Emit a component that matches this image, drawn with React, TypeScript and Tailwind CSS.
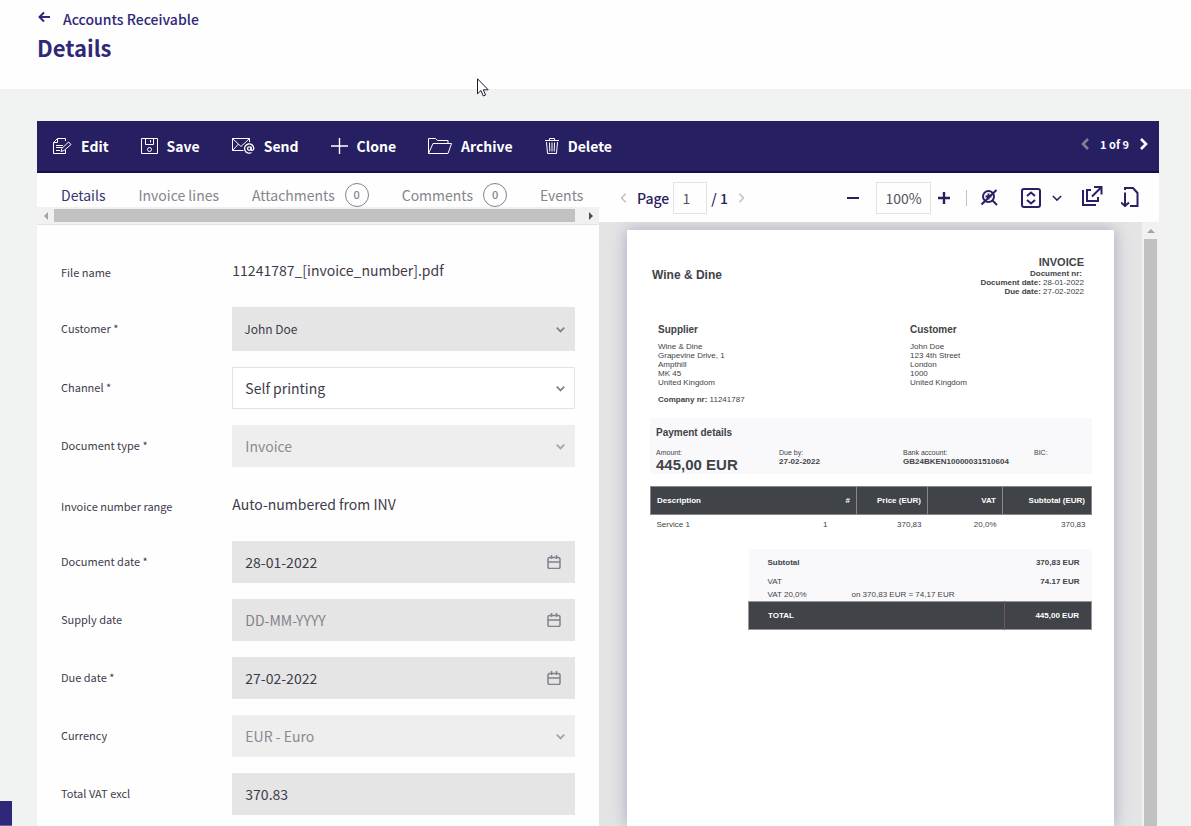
import React from 'react';
import clsx from 'clsx';

const EditIcon = () => (
    <svg width="19" height="16" viewBox="0 0 19 16" fill="none" stroke="currentColor">
        <path d="M12.5 3V.5H4.5l-4 4v11h12V12" />
        <path d="M4.5 .5v4h-4M3 7.5h7M3 9.5h6M3 12.5h4" />
        <path d="M15.5 4l2.5 2.5-7 6-3 1 .8-3z" />
    </svg>
);

const SaveIcon = () => (
    <svg width="17" height="16" viewBox="0 0 17 16" fill="none" stroke="currentColor">
        <path d="M.5 .5h16v15H.5zM4.5 .5v6h8v-6M9.5 2v2.5" />
        <circle cx="8.5" cy="11.5" r="2" />
    </svg>
);

const SendIcon = () => (
    <svg width="23" height="16" viewBox="0 0 23 16" fill="none" stroke="currentColor">
        <path d="M17.5 4V.5H.5v12h11" />
        <path d="M.5 .5L9 8.5l8.5-8M.5 12.5L6.5 6" />
        <circle cx="17.3" cy="10.6" r="1.8" strokeWidth="1.3" />
        <path d="M19.1 8.7v2.8c0 1.3 2.7 1.2 2.7-1.2a4.6 4.6 0 1 0-2.3 4.2" strokeWidth="1.3" />
    </svg>
);

const PlusIcon = () => (
    <svg width="17" height="16" viewBox="0 0 17 16" fill="none" stroke="currentColor" strokeWidth="1.4">
        <path d="M8.5 0v16M0 8h17" />
    </svg>
);

const FolderIcon = () => (
    <svg width="24" height="16" viewBox="0 0 24 16" fill="none" stroke="currentColor">
        <path d="M.5 15.5V.5h7l2 2h10.5v3" />
        <path d="M.5 15.5l4.500-10h18.500l-3.500 10z" />
    </svg>
);

const TrashIcon = () => (
    <svg width="14" height="16" viewBox="0 0 14 16" fill="none" stroke="currentColor">
        <path d="M0 2.5h14M4.500 2.5v-2h5v2M1.500 4l1 11.500h9l1-11.500" />
        <path d="M4.500 4.500l.3 9M7 4.500v9M9.500 4.500l-.3 9" />
    </svg>
);

const Chevron = ({ d, size, width }: { d: string; size: number; width: number }) => (
    <svg width={size} height={size} viewBox="0 0 12 12" fill="none" stroke="currentColor" strokeWidth={width}>
        <path d={d} />
    </svg>
);

const LEFT = 'M8 1L3 6l5 5';
const RIGHT = 'M4 1l5 5-5 5';
const DOWN = 'M1 3.500l5 5 5-5';

const CalendarIcon = () => (
    <svg width="14" height="14" viewBox="0 0 14 14" fill="none" stroke="currentColor" strokeWidth="1.5">
        <rect x="1" y="2.500" width="12" height="11" rx="1.500" />
        <path d="M1 7h12M4.500 0v4M9.500 0v4" />
    </svg>
);

const ACTIONS = [
    { label: 'Edit', icon: <EditIcon /> },
    { label: 'Save', icon: <SaveIcon /> },
    { label: 'Send', icon: <SendIcon /> },
    { label: 'Clone', icon: <PlusIcon /> },
    { label: 'Archive', icon: <FolderIcon /> },
    { label: 'Delete', icon: <TrashIcon /> },
];

const TABS = [
    { label: 'Details' },
    { label: 'Invoice lines' },
    { label: 'Attachments', count: 0 },
    { label: 'Comments', count: 0 },
    { label: 'Events' },
];

type Field = {
    id: string;
    label: string;
    kind: 'text' | 'select' | 'date' | 'input';
    value: string;
    disabled?: boolean;
    look?: string;
};

const FIELDS: Field[] = [
    { id: 'file', label: 'File name', kind: 'text', value: '11241787_[invoice_number].pdf' },
    { id: 'customer', label: 'Customer *', kind: 'select', value: 'John Doe', look: 'h-11 bg-[#e5e5e5] pl-3 text-xs' },
    { id: 'channel', label: 'Channel *', kind: 'select', value: 'Self printing', look: 'h-[42px] border border-[#e3e3e3] bg-white pl-3 text-sm' },
    { id: 'type', label: 'Document type *', kind: 'select', value: 'Invoice', disabled: true, look: 'h-[42px] bg-[#eee] pl-[13px] text-sm' },
    { id: 'range', label: 'Invoice number range', kind: 'text', value: 'Auto-numbered from INV' },
    { id: 'date', label: 'Document date *', kind: 'date', value: '28-01-2022' },
    { id: 'supply', label: 'Supply date', kind: 'date', value: '' },
    { id: 'due', label: 'Due date *', kind: 'date', value: '27-02-2022' },
    { id: 'currency', label: 'Currency', kind: 'select', value: 'EUR - Euro', disabled: true, look: 'h-[42px] bg-[#eee] pl-[13px] text-sm' },
    { id: 'total', label: 'Total VAT excl', kind: 'input', value: '370.83' },
];

const FieldControl = ({ field }: { field: Field }) => {
    if (field.kind === 'text') {
        return <output id={field.id} className="flex h-[42px] items-center text-sm">{field.value}</output>;
    }
    if (field.kind === 'select') {
        return (
            <div className="relative">
                <select
                    id={field.id}
                    disabled={field.disabled}
                    className={clsx('w-full appearance-none pr-8 opacity-100', field.disabled && 'text-[#8d898f]', field.look)}
                >
                    <option>{field.value}</option>
                </select>
                <span className={clsx('pointer-events-none absolute inset-y-0 right-2.5 flex items-center', field.disabled ? 'text-[#a5a3a8]' : 'text-[#85808f]')}>
                    <Chevron d={DOWN} size={9} width={2.4} />
                </span>
            </div>
        );
    }
    return (
        <div className="relative">
            <input
                id={field.id}
                type="text"
                defaultValue={field.value}
                placeholder={field.kind === 'date' ? 'DD-MM-YYYY' : undefined}
                className="h-[42px] w-full bg-[#e5e5e5] pl-[13px] pr-10 text-sm placeholder:text-[#85828a]"
            />
            {field.kind === 'date' && (
                <button type="button" aria-label="Open calendar" className="absolute inset-y-0 right-3.5 text-[#85808f]">
                    <CalendarIcon />
                </button>
            )}
        </div>
    );
};

const DetailsPane = () => (
    <section className="flex min-h-0 min-w-0 flex-col overflow-hidden">
        <nav className="flex h-[34px] shrink-0 items-end gap-[33px] overflow-hidden px-6">
            {TABS.map((tab, i) => (
                <button
                    key={tab.label}
                    className={clsx('flex h-6 shrink-0 items-center gap-2.5 whitespace-nowrap text-sm', i === 0 ? 'text-[#37336b]' : 'text-[#85858d]')}
                >
                    {tab.label}
                    {tab.count !== undefined && (
                        <span className="flex size-6 items-center justify-center rounded-full border border-[#85808f] text-[11px] font-medium">
                            {tab.count}
                        </span>
                    )}
                </button>
            ))}
        </nav>
        {/* Horizontal scrollbar of the tab strip */}
        <div className="flex h-[18px] shrink-0 border-b border-[#e3e3e3] bg-[#f1f1f1]">
            <span className="flex w-[17px] items-center justify-center">
                <svg width="4" height="8" viewBox="0 0 4 8" fill="#a3a3a3"><path d="M4 0v8L0 4z" /></svg>
            </span>
            <span className="my-0.5 flex-1 bg-[#c1c1c1]" />
            <span className="flex w-6 items-center justify-end pr-1.5">
                <svg width="4" height="8" viewBox="0 0 4 8" fill="#505050"><path d="M0 0v8l4-4z" /></svg>
            </span>
        </div>
        <form className="flex flex-col gap-4 p-6 text-[#3f3b4c]">
            {FIELDS.map((field) => (
                <div key={field.id} className="grid shrink-0 grid-cols-3 items-center">
                    <label htmlFor={field.id} className={clsx('text-[11px] leading-4', field.kind === 'text' ? 'pt-1' : 'pb-0.5')}>
                        {field.label}
                    </label>
                    <div className="col-span-2">
                        <FieldControl field={field} />
                    </div>
                </div>
            ))}
        </form>
    </section>
);

const ViewerToolbar = () => (
    <div className="flex h-[49px] shrink-0 items-center px-5 text-sm text-[#272063]">
        <button aria-label="Previous page" className="text-[#c0bfc6]"><Chevron d={LEFT} size={10} width={1.8} /></button>
        <label htmlFor="page" className="ml-2 font-medium">Page</label>
        <input id="page" defaultValue="1" className="ml-1 h-8 w-[34px] border border-[#e3e3e3] pr-2 text-center text-[#55515f]" />
        <span className="ml-1 font-medium">/ 1</span>
        <button aria-label="Next page" className="ml-2 text-[#c0bfc6]"><Chevron d={RIGHT} size={10} width={1.8} /></button>

        <div className="ml-auto flex items-center">
            <button aria-label="Zoom out">
                <svg width="12" height="12" viewBox="0 0 12 12" stroke="currentColor" strokeWidth="2"><path d="M0 6h12" /></svg>
            </button>
            <input aria-label="Zoom level" defaultValue="100%" className="ml-[17px] h-8 w-[55px] border border-[#e3e3e3] text-center text-[#55515f]" />
            <button aria-label="Zoom in" className="ml-[7px]">
                <svg width="12" height="12" viewBox="0 0 12 12" stroke="currentColor" strokeWidth="2.4"><path d="M0 6h12M6 0v12" /></svg>
            </button>
            <span className="ml-4 h-4 w-px bg-[#c0bfc6]" />
            <button aria-label="Reset zoom" className="ml-3.5">
                <svg width="17" height="17" viewBox="0 0 17 17" fill="none" stroke="currentColor" strokeWidth="2">
                    <circle cx="7.500" cy="7.500" r="5.500" />
                    <path d="M11.500 11.500l4.500 4.500M.5 15.500L15.500 1M4.500 7.500h6M7.500 4.500v6" />
                </svg>
            </button>
            <button aria-label="Fit page" className="ml-[23px]">
                <svg width="20" height="20" viewBox="0 0 20 20" fill="none" stroke="currentColor" strokeWidth="2">
                    <rect x="1" y="1" width="18" height="18" rx="2" />
                    <path d="M6 8l4-3.500L14 8M6 12l4 3.500 4-3.500" />
                </svg>
            </button>
            <button aria-label="Fit options" className="ml-[11px]"><Chevron d={DOWN} size={10} width={1.8} /></button>
            <button aria-label="Open in new window" className="mb-1 ml-5">
                <svg width="21" height="20" viewBox="0 0 21 20" fill="none" stroke="currentColor" strokeWidth="2">
                    <path d="M1 4v15h13M9 4H5v11h11v-4M10 10.500L19 1.500M12 1h7.500v7.500" />
                </svg>
            </button>
            <button aria-label="Download" className="mb-0.5 ml-[18px]">
                <svg width="18" height="20" viewBox="0 0 18 20" fill="none" stroke="currentColor" strokeWidth="2">
                    <path d="M4 3V1h8l4.500 5v13H9M4 5.500V19M0 15.500l4 3.500 4-3.500" />
                </svg>
            </button>
        </div>
    </div>
);

const ADDRESSES = [
    { title: 'Supplier', lines: ['Wine & Dine', 'Grapevine Drive, 1', 'Ampthill', 'MK 45', 'United Kingdom'], company: '11241787' },
    { title: 'Customer', lines: ['John Doe', '123 4th Street', 'London', '1000', 'United Kingdom'] },
];

const InvoicePaper = () => (
    <article className="mx-7 mt-2 min-h-0 flex-1 bg-white pl-[23px] pr-[22px] font-['Liberation_Sans',Arial,sans-serif] text-[8px] leading-[9px] text-[#404347] shadow-[0_0_15px_rgba(60,50,130,0.35)]">
        <div className="flex justify-between pl-0.5 pr-2 pt-[25px]">
            <h2 className="pt-3 text-[12px] font-bold leading-4">Wine &amp; Dine</h2>
            <div className="text-right">
                <h3 className="text-[11px] font-bold leading-[14px]">INVOICE</h3>
                <p className="pr-0.5"><b>Document nr:</b></p>
                <p><b>Document date:</b> 28-01-2022</p>
                <p><b>Due date:</b> 27-02-2022</p>
            </div>
        </div>

        <div className="mt-7 grid h-[94px] grid-cols-[252px_1fr] pl-2">
            {ADDRESSES.map((address) => (
                <div key={address.title}>
                    <h3 className="text-[10px] font-bold leading-3">{address.title}</h3>
                    <div className="mt-1.5">
                        {address.lines.map((line) => <p key={line}>{line}</p>)}
                    </div>
                    {address.company && <p className="mt-2"><b>Company nr:</b> {address.company}</p>}
                </div>
            ))}
        </div>

        <div className="h-14 bg-[#f9f9fc] px-1.5 pt-2">
            <h3 className="text-[10px] font-bold leading-[14px]">Payment details</h3>
            <dl className="mt-2 grid grid-cols-[123px_124px_131px_1fr]">
                <div>
                    <dt className="text-[7px] leading-[9px]">Amount:</dt>
                    <dd className="text-[15px] font-bold leading-4">445,00 EUR</dd>
                </div>
                <div>
                    <dt className="text-[7px] leading-[9px]">Due by:</dt>
                    <dd className="font-bold">27-02-2022</dd>
                </div>
                <div>
                    <dt className="text-[7px] leading-[9px]">Bank account:</dt>
                    <dd className="font-bold">GB24BKEN10000031510604</dd>
                </div>
                <div>
                    <dt className="text-[7px] leading-[9px]">BIC:</dt>
                </div>
            </dl>
        </div>

        <table className="mt-3 w-full table-fixed text-right">
            <colgroup>
                <col />
                <col className="w-10" />
                <col className="w-[71px]" />
                <col className="w-[75px]" />
                <col className="w-[89px]" />
            </colgroup>
            <thead className="border border-[#8b858c] bg-[#404347] text-white">
                <tr className="h-7">
                    <th className="pl-1.5 text-left">Description</th>
                    <th className="border-r border-[#8b858c] px-1.5">#</th>
                    <th className="border-r border-[#8b858c] px-1.5">Price (EUR)</th>
                    <th className="border-r border-[#8b858c] px-1.5">VAT</th>
                    <th className="px-1.5">Subtotal (EUR)</th>
                </tr>
            </thead>
            <tbody>
                <tr className="h-5">
                    <td className="pl-1.5 text-left">Service 1</td>
                    <td className="pr-[29px]">1</td>
                    <td className="px-1.5">370,83</td>
                    <td className="px-1.5">20,0%</td>
                    <td className="px-1.5">370,83</td>
                </tr>
            </tbody>
        </table>

        <table className="ml-auto mt-3.5 w-[344px] table-fixed">
            <colgroup>
                <col className="w-[103px]" />
                <col />
                <col className="w-[87px]" />
            </colgroup>
            <tbody className="bg-[#f9f9fc]">
                <tr className="h-[27px]">
                    <th className="pl-[19px] text-left">Subtotal</th>
                    <td />
                    <td className="pr-3 text-right font-bold">370,83 EUR</td>
                </tr>
                <tr className="h-3">
                    <td className="pl-[19px]">VAT</td>
                    <td />
                    <td className="pr-3 text-right font-bold">74.17 EUR</td>
                </tr>
                <tr className="h-[14px]">
                    <td className="pl-[19px]">VAT 20,0%</td>
                    <td>on 370,83 EUR = 74,17 EUR</td>
                    <td />
                </tr>
            </tbody>
            <tfoot className="border border-[#9a949b] bg-[#404347] text-white">
                <tr className="h-7">
                    <th className="pl-[19px] text-left">TOTAL</th>
                    <td className="border-r border-[#6b5a62]" />
                    <td className="pr-3 text-right font-bold">445,00 EUR</td>
                </tr>
            </tfoot>
        </table>
    </article>
);

const ViewerPane = () => (
    <section className="flex min-h-0 min-w-0 flex-col">
        <ViewerToolbar />
        <div className="flex min-h-0 flex-1">
            <div className="flex min-w-0 flex-1 flex-col overflow-hidden bg-[#e4e4e4]">
                <InvoicePaper />
            </div>
            {/* Vertical scrollbar */}
            <div className="flex w-[17px] flex-col items-center bg-[#f1f1f1]">
                <span className="flex h-[17px] items-center">
                    <svg width="8" height="4" viewBox="0 0 8 4" fill="#a3a3a3"><path d="M0 4h8L4 0z" /></svg>
                </span>
                <span className="w-[13px] flex-1 bg-[#c1c1c1]" />
            </div>
        </div>
    </section>
);

const App: React.FC = () => (
    <div className="relative flex h-screen flex-col overflow-hidden bg-[#f1f3f3] font-['Noto_Sans_CJK_SC',sans-serif]">
        <header className="h-[89px] shrink-0 bg-[#fefefe] pl-[37px] pt-[7px] text-[#2f2878]">
            <a href="#" className="flex h-6 items-center gap-3 text-sm font-medium">
                <svg width="14" height="12" viewBox="0 0 14 12" fill="none" stroke="currentColor" strokeWidth="2" className="mb-1">
                    <path d="M13 6H3M7 1.500L2.500 6 7 10.500" />
                </svg>
                Accounts Receivable
            </a>
            <h1 className="text-[22px] font-bold leading-8">Details</h1>
        </header>

        <main className="flex min-h-0 flex-1 flex-col pl-[37px] pr-8 pt-8">
            <div className="flex h-[52px] shrink-0 items-center gap-8 border-b-2 border-[#160c4e] bg-[#262063] px-4 text-white">
                {ACTIONS.map((action) => (
                    <button key={action.label} className="flex items-center gap-[9px] text-sm font-bold">
                        {action.icon}
                        {action.label}
                    </button>
                ))}
                <div className="mb-1 ml-auto -mr-1.5 flex items-center gap-2 text-[11px] font-bold">
                    <button aria-label="Previous invoice" className="text-[#85808f]"><Chevron d={LEFT} size={12} width={2.6} /></button>
                    1 of 9
                    <button aria-label="Next invoice"><Chevron d={RIGHT} size={12} width={2.6} /></button>
                </div>
            </div>
            <div className="grid min-h-0 flex-1 grid-cols-[562fr_560fr] bg-[#fefefe]">
                <DetailsPane />
                <ViewerPane />
            </div>
        </main>

        {/* Side tab peeking in from the left edge */}
        <div className="absolute bottom-0 left-0 h-[25px] w-3 border-b border-[#6a64a0] bg-[#2f2878]" />

        {/* Mouse pointer */}
        <svg className="absolute left-[477px] top-[78px]" width="12" height="19" viewBox="0 0 12 19" fill="#fff" stroke="#1c1a2c">
            <path d="M.5 .8v15l3.500-3.300 2.300 5.500 2.300-1-2.300-5.200h4.900z" />
        </svg>
    </div>
);

export default App;
